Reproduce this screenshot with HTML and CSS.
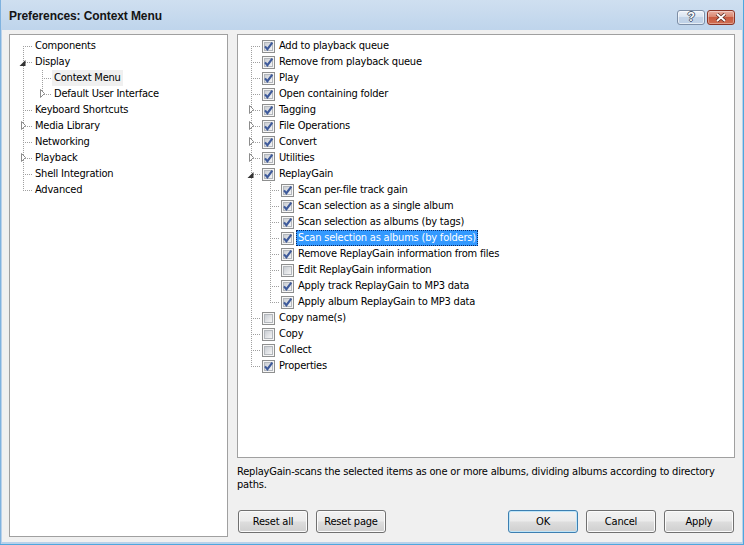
FILE: index.html
```html
<!DOCTYPE html>
<html>
	<head>
		<meta charset="UTF-8">
		<title>Preferences: Context Menu</title>
		<link rel="stylesheet" href="styles.css">
	</head>
	<body>
		<svg class="defs" width="0" height="0">
			<defs>
				<linearGradient id="cbFill" x1="0" y1="0" x2="1" y2="1">
					<stop offset="0" stop-color="#c6cad0"/>
					<stop offset="1" stop-color="#f8f8f8"/>
				</linearGradient>
				<symbol id="cbOff" viewBox="0 0 13 13">
					<rect x="0.5" y="0.5" width="12" height="12" fill="#f6f6f6" stroke="#8e8f8f"/>
					<rect x="2.5" y="2.5" width="8" height="8" fill="url(#cbFill)" stroke="#b3b7bc"/>
				</symbol>
				<symbol id="cbOn" viewBox="0 0 13 13">
					<use href="#cbOff"/>
					<path d="M3 6.3 L5.4 9.2 L10.3 2.6" fill="none" stroke="#3f5b9b" stroke-width="2.1"/>
				</symbol>
				<symbol id="expC" viewBox="0 0 9 10">
					<path d="M2.5 0.5 L6.5 4.5 L2.5 8.5 Z" fill="#fff" stroke="#8c8c8c"/>
				</symbol>
				<symbol id="expO" viewBox="0 0 9 10">
					<path d="M6.5 3 V9 H0.5 Z" fill="#333"/>
				</symbol>
			</defs>
		</svg>

		<div class="window">
			<div class="titlebar">
				<div class="title">Preferences: Context Menu</div>
				<div class="caption-btns">
					<span class="cbtn help">?</span>
					<span class="cbtn close">
						<svg width="12" height="9" viewBox="0 0 12 9">
							<path d="M2 1 L10 8 M10 1 L2 8" stroke="#5a2a22" stroke-width="3.4"/>
							<path d="M2 1 L10 8 M10 1 L2 8" stroke="#fff" stroke-width="1.8"/>
						</svg>
					</span>
				</div>
			</div>

			<div class="client">
				<div class="tree pages">
					<ul>
						<li><div class="row"><span class="label">Components</span></div></li>
						<li>
							<div class="row"><svg class="exp"><use href="#expO"/></svg><span class="label">Display</span></div>
							<ul>
								<li><div class="row"><span class="label inactive">Context Menu</span></div></li>
								<li><div class="row"><svg class="exp"><use href="#expC"/></svg><span class="label">Default User Interface</span></div></li>
							</ul>
						</li>
						<li><div class="row"><span class="label">Keyboard Shortcuts</span></div></li>
						<li><div class="row"><svg class="exp"><use href="#expC"/></svg><span class="label">Media Library</span></div></li>
						<li><div class="row"><span class="label">Networking</span></div></li>
						<li><div class="row"><svg class="exp"><use href="#expC"/></svg><span class="label">Playback</span></div></li>
						<li><div class="row"><span class="label">Shell Integration</span></div></li>
						<li><div class="row"><span class="label">Advanced</span></div></li>
					</ul>
				</div>

				<div class="page">
					<div class="tree commands">
						<ul>
							<li><div class="row"><svg class="chk"><use href="#cbOn"/></svg><span class="label">Add to playback queue</span></div></li>
							<li><div class="row"><svg class="chk"><use href="#cbOn"/></svg><span class="label">Remove from playback queue</span></div></li>
							<li><div class="row"><svg class="chk"><use href="#cbOn"/></svg><span class="label">Play</span></div></li>
							<li><div class="row"><svg class="chk"><use href="#cbOn"/></svg><span class="label">Open containing folder</span></div></li>
							<li><div class="row"><svg class="exp"><use href="#expC"/></svg><svg class="chk"><use href="#cbOn"/></svg><span class="label">Tagging</span></div></li>
							<li><div class="row"><svg class="exp"><use href="#expC"/></svg><svg class="chk"><use href="#cbOn"/></svg><span class="label">File Operations</span></div></li>
							<li><div class="row"><svg class="exp"><use href="#expC"/></svg><svg class="chk"><use href="#cbOn"/></svg><span class="label">Convert</span></div></li>
							<li><div class="row"><svg class="exp"><use href="#expC"/></svg><svg class="chk"><use href="#cbOn"/></svg><span class="label">Utilities</span></div></li>
							<li>
								<div class="row"><svg class="exp"><use href="#expO"/></svg><svg class="chk"><use href="#cbOn"/></svg><span class="label">ReplayGain</span></div>
								<ul>
									<li><div class="row"><svg class="chk"><use href="#cbOn"/></svg><span class="label">Scan per-file track gain</span></div></li>
									<li><div class="row"><svg class="chk"><use href="#cbOn"/></svg><span class="label">Scan selection as a single album</span></div></li>
									<li><div class="row"><svg class="chk"><use href="#cbOn"/></svg><span class="label">Scan selection as albums (by tags)</span></div></li>
									<li><div class="row"><svg class="chk"><use href="#cbOn"/></svg><span class="label sel">Scan selection as albums (by folders)</span></div></li>
									<li><div class="row"><svg class="chk"><use href="#cbOn"/></svg><span class="label">Remove ReplayGain information from files</span></div></li>
									<li><div class="row"><svg class="chk"><use href="#cbOff"/></svg><span class="label">Edit ReplayGain information</span></div></li>
									<li><div class="row"><svg class="chk"><use href="#cbOn"/></svg><span class="label">Apply track ReplayGain to MP3 data</span></div></li>
									<li><div class="row"><svg class="chk"><use href="#cbOn"/></svg><span class="label">Apply album ReplayGain to MP3 data</span></div></li>
								</ul>
							</li>
							<li><div class="row"><svg class="chk"><use href="#cbOff"/></svg><span class="label">Copy name(s)</span></div></li>
							<li><div class="row"><svg class="chk"><use href="#cbOff"/></svg><span class="label">Copy</span></div></li>
							<li><div class="row"><svg class="chk"><use href="#cbOff"/></svg><span class="label">Collect</span></div></li>
							<li><div class="row"><svg class="chk"><use href="#cbOn"/></svg><span class="label">Properties</span></div></li>
						</ul>
					</div>

					<p class="desc">ReplayGain-scans the selected items as one or more albums, dividing albums according to directory paths.</p>

					<div class="buttons">
						<div class="group">
							<button class="btn">Reset all</button>
							<button class="btn">Reset page</button>
						</div>
						<div class="group end">
							<button class="btn default">OK</button>
							<button class="btn">Cancel</button>
							<button class="btn">Apply</button>
						</div>
					</div>
				</div>
			</div>
		</div>
	</body>
</html>
```

FILE: styles.css
```css
html,body,div,p,ul,li,span {
	margin: 0;
	padding: 0;
}
body {
	font-family: "DejaVu Sans Condensed", "Liberation Sans", sans-serif;
	font-size: 11px;
	letter-spacing: -0.2px;
	color: #000;
	background-color: #bcd3eb;
}
.defs {
	display: block;
	width: 0;
	height: 0;
	overflow: hidden;
}

/* window frame */
.window {
	width: 744px;
	height: 545px;
	display: flex;
	flex-direction: column;
	background: linear-gradient(#cfdff0, #b9d1ea 40px, #b9d1ea);
	box-shadow: inset -1px -1px 0 #4ea7de, inset 1px 0 0 #7fb2df;
}
.titlebar {
	height: 30px;
	flex: none;
	display: flex;
	align-items: flex-start;
	padding: 0 9px;
}
.title {
	margin-top: 9px;
	line-height: 15px;
	font-family: "Liberation Sans", sans-serif;
	font-weight: bold;
	font-size: 12px;
	letter-spacing: -0.1px;
	color: #141414;
}
.caption-btns {
	margin-left: auto;
	margin-top: 10px;
	display: flex;
	gap: 2px;
}
.cbtn {
	box-sizing: border-box;
	width: 28px;
	height: 15px;
	border-radius: 3px;
	display: flex;
	align-items: center;
	justify-content: center;
}
.cbtn.help {
	border: 1px solid #7d8ea6;
	background: linear-gradient(#edf2f9, #d7e3f1 50%, #c3d4e8 50%, #bed1e7);
	box-shadow: inset 0 0 0 1px rgba(255,255,255,0.6);
	font-family: "Liberation Sans", sans-serif;
	font-weight: bold;
	font-size: 12px;
	line-height: 13px;
	color: #fff;
	text-shadow: 1px 0 0 #4b5a70, -1px 0 0 #4b5a70, 0 1px 0 #4b5a70, 0 -1px 0 #4b5a70;
}
.cbtn.close {
	border: 1px solid #8a3426;
	background: linear-gradient(#eab0a2, #d98770 45%, #c95a40 50%, #d06e52);
	box-shadow: inset 0 0 0 1px rgba(255,255,255,0.35);
}

/* dialog area */
.client {
	flex: 1;
	margin: 0 2px 3px;
	padding: 4px 7px 5px;
	background-color: #f0f0f0;
	display: flex;
	gap: 9px;
}
.pages {
	width: 219px;
	flex: none;
}
.page {
	flex: 1;
	display: flex;
	flex-direction: column;
}
.commands {
	height: 424px;
	flex: none;
}

/* tree views */
.tree {
	box-sizing: border-box;
	background-color: #fff;
	border: 1px solid #a0a0a0;
	padding-top: 3px;
	overflow: hidden;
}
.tree ul {
	list-style: none;
}
.tree ul ul {
	margin-left: 19px;
}
.tree li {
	position: relative;
}
.tree li::before {
	content: "";
	position: absolute;
	left: 13px;
	top: 0;
	bottom: 0;
	width: 1px;
	background: repeating-linear-gradient(to bottom, #a0a0a0 0 1px, transparent 1px 2px);
}
.tree > ul > li:first-child::before {
	top: 8px;
}
.tree li:last-child::before {
	bottom: auto;
	height: 9px;
}
.tree > ul > li:first-child:last-child::before {
	height: 1px;
}
.row {
	position: relative;
	height: 16px;
	display: flex;
	align-items: center;
	padding-left: 23px;
}
.row::before {
	content: "";
	position: absolute;
	left: 14px;
	top: 8px;
	width: 9px;
	height: 1px;
	background: repeating-linear-gradient(to right, transparent 0 1px, #a0a0a0 1px 2px);
}
.exp {
	position: absolute;
	left: 9px;
	top: 3px;
	width: 9px;
	height: 10px;
}
.chk {
	flex: none;
	width: 13px;
	height: 13px;
	margin: 0 2px 0 1px;
}
.label {
	height: 16px;
	line-height: 16px;
	padding: 0 2px;
	white-space: nowrap;
}
.label.inactive {
	background-color: #f0f0f0;
}
.label.sel {
	background-color: #3399ff;
	color: #fff;
	outline: 1px dotted #0b2a66;
	outline-offset: -1px;
}

.desc {
	margin-top: 7px;
	line-height: 13px;
}

/* push buttons */
.buttons {
	margin-top: auto;
	margin-bottom: 4px;
	padding: 0 1px;
	display: flex;
}
.buttons .group {
	display: flex;
	gap: 8px;
}
.buttons .end {
	margin-left: auto;
}
.btn {
	box-sizing: border-box;
	width: 70px;
	height: 23px;
	padding: 0;
	border: 1px solid #707070;
	border-radius: 3px;
	background: linear-gradient(#f2f2f2, #ebebeb 48%, #dddddd 52%, #cfcfcf);
	box-shadow: inset 0 0 0 1px #fbfbfb;
	font: inherit;
	letter-spacing: inherit;
	color: #000;
}
.btn.default {
	border-color: #3c7fb1;
	box-shadow: inset 0 0 0 1px #bfe5f8;
}
```
